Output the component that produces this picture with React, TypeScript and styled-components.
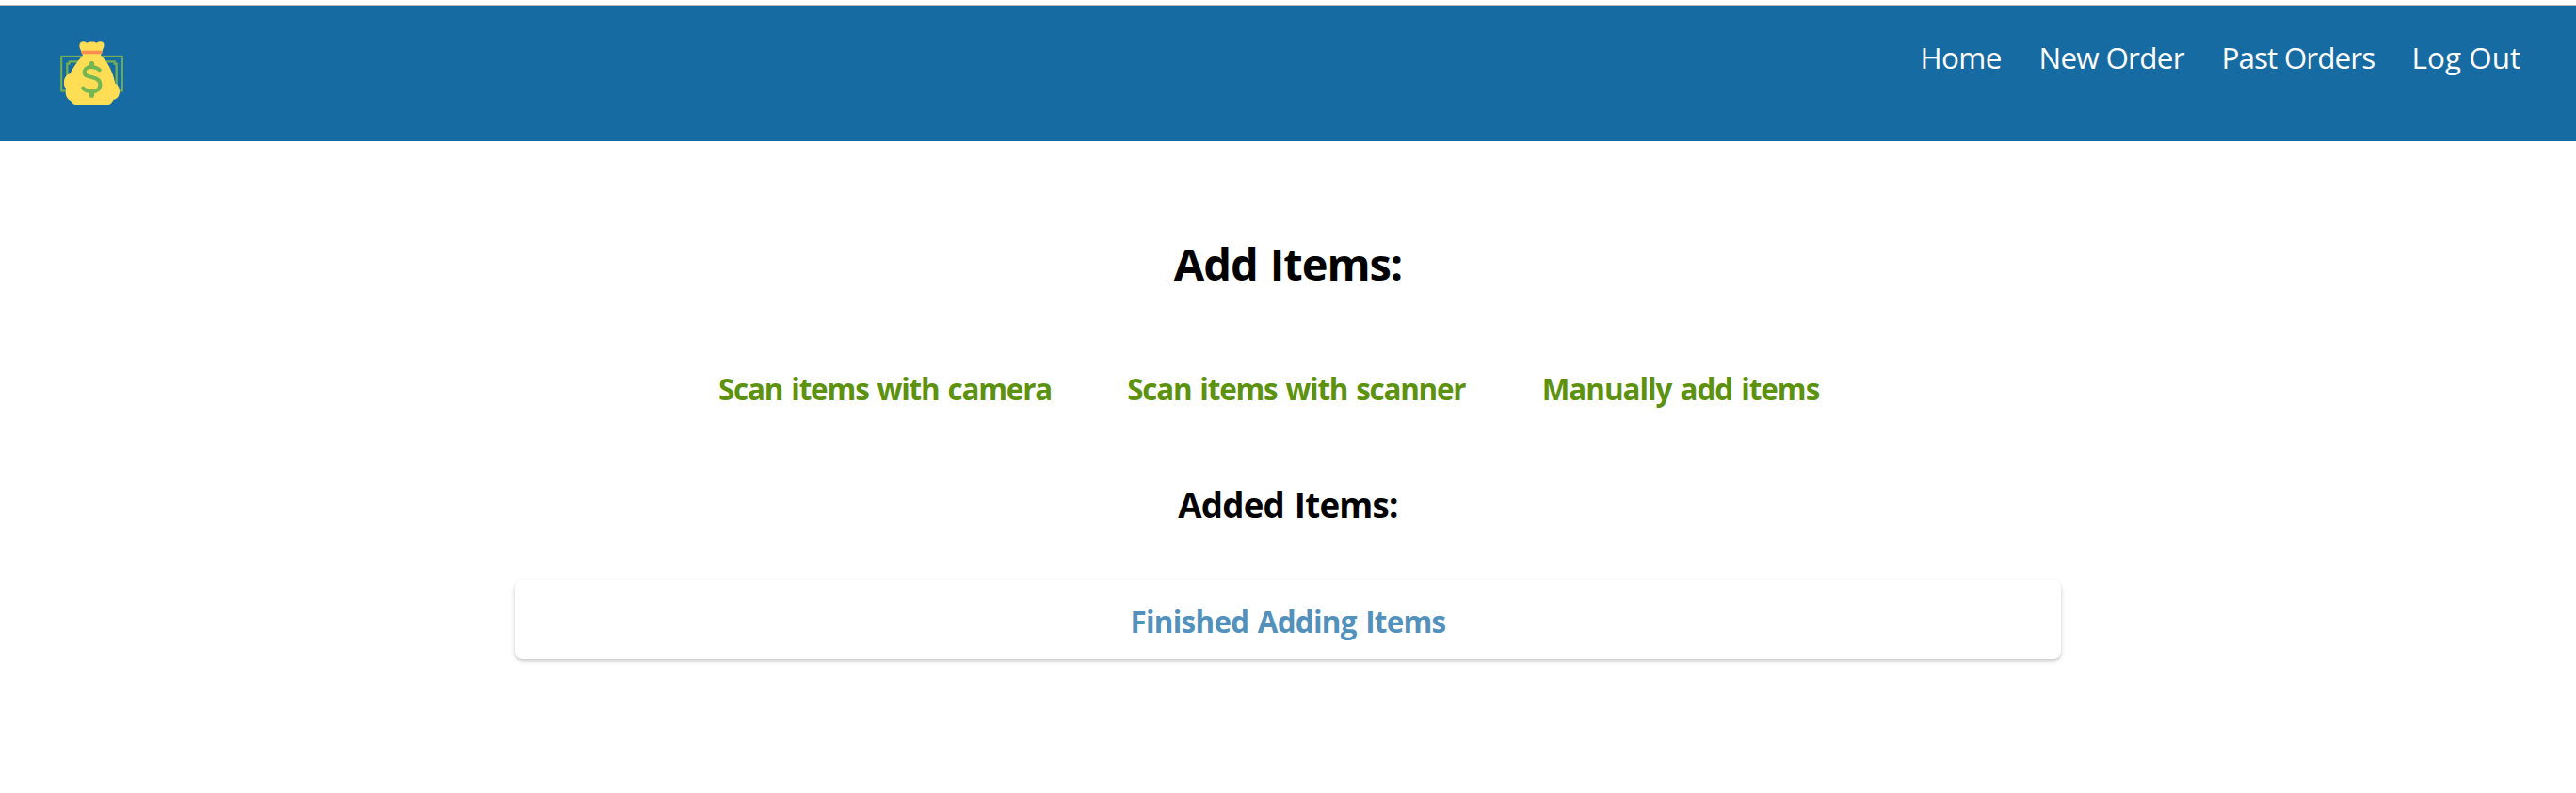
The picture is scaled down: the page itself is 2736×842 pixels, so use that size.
import React from 'react';
import styled, { createGlobalStyle } from 'styled-components';

const GlobalStyle = createGlobalStyle`
  *, *::before, *::after { box-sizing: border-box; }
  body {
    margin: 0;
    background: #fff;
    font-family: "Open Sans", "Noto Sans", sans-serif;
  }
`;

const Page = styled.div`
  display: flex;
  flex-direction: column;
  min-height: 842px;
  padding-top: 5px;
  overflow: hidden;
`;

const Header = styled.header`
  display: flex;
  justify-content: space-between;
  align-items: flex-start;
  height: 145px;
  padding-left: 63px;
  border-top: 1px solid #b5b5b5;
  background: #176ba3;
`;

const Logo = styled.svg`
  display: block;
  width: 70px;
  height: 72px;
  margin-top: 35px;
`;

const Nav = styled.nav`
  display: grid;
  grid-template-columns: 126px 194px 202px 174.5px;
  margin-top: 34px;
`;

const NavLink = styled.a<{ $tracking: number }>`
  color: #fff;
  font-size: 31.4px;
  line-height: 42px;
  letter-spacing: ${({ $tracking }) => $tracking}px;
  white-space: nowrap;
`;

const Main = styled.main`
  display: flex;
  flex-direction: column;
  align-items: center;
  padding-top: 98px;
`;

const Title = styled.h1`
  margin: 0;
  font-size: 47px;
  line-height: 64px;
  letter-spacing: -1.04px;
  word-spacing: 2px;
`;

const Subtitle = styled.h2`
  margin: 77px 0 0;
  font-size: 36.7px;
  line-height: 50px;
  letter-spacing: -0.76px;
  word-spacing: 2px;
`;

const Methods = styled.div`
  display: grid;
  grid-template-columns: 434.3px 440.5px 336.2px;
  width: 1211px;
  margin: 80px 0 0 1px;
`;

const Method = styled.a<{ $tracking: number }>`
  color: #5c9210;
  font-size: 31.4px;
  font-weight: 700;
  line-height: 42px;
  letter-spacing: ${({ $tracking }) => $tracking}px;
  word-spacing: 2px;
  white-space: nowrap;
`;

const FinishButton = styled.button`
  width: 1642px;
  height: 84px;
  margin-top: 55px;
  padding: 4px 0 0;
  border: 0;
  border-radius: 8px;
  background: #fff;
  box-shadow: 0 2px 6px rgba(0, 0, 0, 0.09), 0 2px 3px rgba(0, 0, 0, 0.15);
  color: #5391bd;
  font: 700 31.4px/42px "Open Sans", "Noto Sans", sans-serif;
  letter-spacing: -0.73px;
  word-spacing: 2px;
`;

const links = [
  { label: 'Home', tracking: -0.63 },
  { label: 'New Order', tracking: -0.71 },
  { label: 'Past Orders', tracking: -0.89 },
  { label: 'Log Out', tracking: 0.07 },
];

const methods = [
  { label: 'Scan items with camera', tracking: -1.18 },
  { label: 'Scan items with scanner', tracking: -1.22 },
  { label: 'Manually add items', tracking: -1.03 },
];

function MoneyBag() {
  return (
    <Logo viewBox="69 123 210 216" aria-label="Money bag">
      <g fill="none" stroke="#73af50" strokeWidth="6">
        <rect x="75.5" y="179.500" width="194" height="110" />
        <path d="M94 289V203H101V196H245V203H251V289" strokeWidth="7" />
      </g>
      <path
        fill="#ffdd55"
        d="M144 176L134 152C131 142 136 133 145 133C151 133 154 136 157 137C163 132 182 132 188 137C192 134 195 133 201 133C210 133 214 142 210 151L201 176C221 195 239 223 247 266C255 269 261 278 261 290C261 305 254 315 242 317C236 328 228 335 219 335H126C117 335 110 328 105 321C94 316 89 306 89 295Q89 288 91 283C84 277 83 269 84 259C85 247 92 238 103 235C112 216 127 195 144 176Z"
      />
      <rect x="139" y="161" width="67" height="11" rx="5" fill="#ff8c50" />
      <g fill="none" stroke="#73b755" strokeLinecap="round">
        <path
          strokeWidth="12.5"
          d="M197 223C189 215 181 213 170 213C157 213 149 221 149 230C149 240 157 243 173 246C191 250 199 257 199 269C199 283 188 292 174 292C161 292 152 289 145 281"
        />
        <path strokeWidth="16" d="M172.500 203V209M172.500 295V304" />
      </g>
    </Logo>
  );
}

export default function App() {
  return (
    <Page>
      <GlobalStyle />
      <Header>
        <MoneyBag />
        <Nav>
          {links.map(({ label, tracking }) => (
            <NavLink key={label} $tracking={tracking}>{label}</NavLink>
          ))}
        </Nav>
      </Header>
      <Main>
        <Title>Add Items:</Title>
        <Methods>
          {methods.map(({ label, tracking }) => (
            <Method key={label} $tracking={tracking}>{label}</Method>
          ))}
        </Methods>
        <Subtitle>Added Items:</Subtitle>
        <FinishButton>Finished Adding Items</FinishButton>
      </Main>
    </Page>
  );
}
